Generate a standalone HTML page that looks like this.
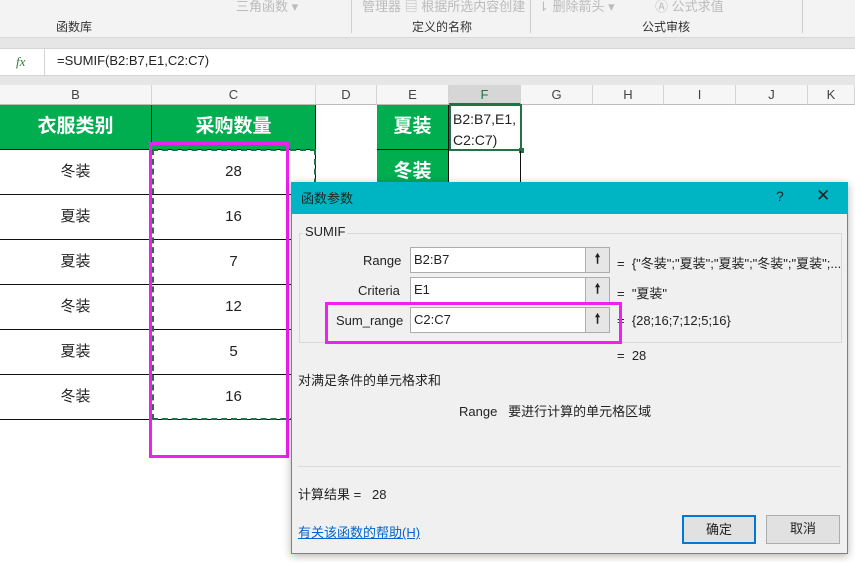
<!DOCTYPE html>
<html><head><meta charset="utf-8"><style>
*{margin:0;padding:0;box-sizing:border-box}
body{width:855px;height:562px;overflow:hidden;background:#fff;position:relative;font-family:"Liberation Sans","Noto Sans CJK SC",sans-serif;font-size:13px;color:#222}
.a{position:absolute}
.t{position:absolute;white-space:nowrap}
.hc{position:absolute;top:85px;height:20px;background:#f6f6f6;border-right:1px solid #d4d4d4;border-bottom:1px solid #bbb;text-align:center;line-height:20px;color:#444;font-size:13px}
.g{position:absolute;background:#00ad4f;color:#fff;font-weight:bold;font-size:19px;text-align:center;border-right:1px solid #111;border-bottom:1px solid #111}
.c{position:absolute;text-align:center;font-size:15px;border-bottom:1px solid #111;border-right:1px solid #111}
.btn{position:absolute;background:#e1e1e1;border:1px solid #adadad;text-align:center;font-size:13px;line-height:26px}
.inp{position:absolute;left:410px;width:200px;height:26px;background:#fff;border:1px solid #adadad;font-size:13px;line-height:24px;padding-left:3px}
.up{position:absolute;right:0;top:0;width:24px;height:24px;background:#e6e6e6;border-left:1px solid #adadad;text-align:center;font-weight:bold;line-height:22px}
</style></head><body>
<div class="a" style="left:0;top:0;width:855px;height:38px;background:#f3f3f3;border-bottom:1px solid #d8d8d8"></div>
<div class="t" style="left:236px;top:-4px;color:#bbb">三角函数 ▾</div>
<div class="t" style="left:362px;top:-4px;color:#bbb">管理器 ▤ 根据所选内容创建</div>
<div class="t" style="left:538px;top:-4px;color:#bbb">⇂ 删除箭头 ▾</div>
<div class="t" style="left:655px;top:-4px;color:#bbb">Ⓐ 公式求值</div>
<div class="t" style="left:56px;top:18px;font-size:12px;color:#333">函数库</div>
<div class="t" style="left:412px;top:18px;font-size:12px;color:#333">定义的名称</div>
<div class="t" style="left:642px;top:18px;font-size:12px;color:#333">公式审核</div>
<div class="a" style="left:351px;top:0;width:1px;height:33px;background:#d0d0d0"></div>
<div class="a" style="left:530px;top:0;width:1px;height:33px;background:#d0d0d0"></div>
<div class="a" style="left:802px;top:0;width:1px;height:33px;background:#d0d0d0"></div>
<div class="a" style="left:0;top:38px;width:855px;height:47px;background:#e6e6e6"></div>
<div class="a" style="left:0;top:48px;width:855px;height:28px;background:#fff;border-top:1px solid #d4d4d4;border-bottom:1px solid #d4d4d4"></div>
<div class="a" style="left:44px;top:48px;width:1px;height:28px;background:#d4d4d4"></div>
<div class="t" style="left:16px;top:54px;font-style:italic;color:#2a7a3a;font-family:'Liberation Serif',serif">fx</div>
<div class="t" style="left:57px;top:53px;font-size:13px">=SUMIF(B2:B7,E1,C2:C7)</div>
<div class="hc" style="left:0;width:152px">B</div>
<div class="hc" style="left:152px;width:164px">C</div>
<div class="hc" style="left:316px;width:61px">D</div>
<div class="hc" style="left:377px;width:72px">E</div>
<div class="hc" style="left:449px;width:72px;background:#d6d6d6;border-bottom:2px solid #217346;color:#217346">F</div>
<div class="hc" style="left:521px;width:72px">G</div>
<div class="hc" style="left:593px;width:71px">H</div>
<div class="hc" style="left:664px;width:72px">I</div>
<div class="hc" style="left:736px;width:72px">J</div>
<div class="hc" style="left:808px;width:47px">K</div>
<div class="g" style="left:0;top:105px;width:152px;height:45px;line-height:44px">衣服类别</div>
<div class="g" style="left:152px;top:105px;width:164px;height:45px;line-height:44px">采购数量</div>
<div class="g" style="left:377px;top:105px;width:72px;height:45px;line-height:44px">夏装</div>
<div class="g" style="left:377px;top:150px;width:72px;height:45px;line-height:44px">冬装</div>
<div class="a" style="left:449px;top:104px;width:73px;height:47px;border:2px solid #217346;background:#fff;font-size:14px;line-height:21px;padding:3px 2px">B2:B7,E1,<br>C2:C7)</div>
<div class="a" style="left:519px;top:148px;width:5px;height:5px;background:#217346"></div>
<div class="a" style="left:449px;top:151px;width:72px;height:44px;border-right:1px solid #111"></div>
<div class="c" style="left:0;top:150px;width:152px;height:45px;line-height:44px">冬装</div><div class="c" style="left:152px;top:150px;width:164px;height:45px;line-height:44px">28</div>
<div class="c" style="left:0;top:195px;width:152px;height:45px;line-height:44px">夏装</div><div class="c" style="left:152px;top:195px;width:164px;height:45px;line-height:44px">16</div>
<div class="c" style="left:0;top:240px;width:152px;height:45px;line-height:44px">夏装</div><div class="c" style="left:152px;top:240px;width:164px;height:45px;line-height:44px">7</div>
<div class="c" style="left:0;top:285px;width:152px;height:45px;line-height:44px">冬装</div><div class="c" style="left:152px;top:285px;width:164px;height:45px;line-height:44px">12</div>
<div class="c" style="left:0;top:330px;width:152px;height:45px;line-height:44px">夏装</div><div class="c" style="left:152px;top:330px;width:164px;height:45px;line-height:44px">5</div>
<div class="c" style="left:0;top:375px;width:152px;height:45px;line-height:44px">冬装</div><div class="c" style="left:152px;top:375px;width:164px;height:45px;line-height:44px">16</div>
<div class="a" style="left:152px;top:149px;width:164px;height:271px;border:2px dashed #217346"></div>
<div class="a" style="left:149px;top:142px;width:140px;height:316px;border:3px solid #f020f0"></div>
<!-- dialog -->
<div class="a" style="left:291px;top:182px;width:557px;height:372px;background:#f0f0f0;border:1px solid #00b4c4;box-shadow:0 2px 8px rgba(0,0,0,.3)"></div>
<div class="a" style="left:291px;top:182px;width:557px;height:32px;background:#00b5c3"></div>
<div class="t" style="left:301px;top:188px;font-size:13px">函数参数</div>
<div class="t" style="left:776px;top:188px;font-size:14px">?</div>
<div class="t" style="left:816px;top:186px;font-size:17px;font-weight:300">✕</div>
<div class="a" style="left:299px;top:233px;width:543px;height:110px;border:1px solid #d8d8d8"></div>
<div class="t" style="left:303px;top:224px;background:#f0f0f0;padding:0 2px;font-size:13px">SUMIF</div>
<div class="t" style="left:363px;top:253px">Range</div>
<div class="t" style="left:358px;top:283px">Criteria</div>
<div class="t" style="left:336px;top:313px">Sum_range</div>
<div class="inp" style="top:247px">B2:B7<div class="up">🠕</div></div>
<div class="inp" style="top:277px">E1<div class="up">🠕</div></div>
<div class="inp" style="top:307px">C2:C7<div class="up">🠕</div></div>
<div class="t" style="left:617px;top:253px">=&nbsp;&nbsp;{"冬装";"夏装";"夏装";"冬装";"夏装";...</div>
<div class="t" style="left:617px;top:283px">=&nbsp;&nbsp;"夏装"</div>
<div class="t" style="left:617px;top:313px">=&nbsp;&nbsp;{28;16;7;12;5;16}</div>
<div class="t" style="left:617px;top:348px">=&nbsp;&nbsp;28</div>
<div class="a" style="left:325px;top:302px;width:297px;height:42px;border:3px solid #f020f0"></div>
<div class="t" style="left:298px;top:370px">对满足条件的单元格求和</div>
<div class="t" style="left:459px;top:401px">Range&nbsp;&nbsp;&nbsp;要进行计算的单元格区域</div>
<div class="a" style="left:298px;top:466px;width:543px;height:1px;background:#dadada"></div>
<div class="t" style="left:298px;top:484px">计算结果 =&nbsp;&nbsp;&nbsp;28</div>
<div class="t" style="left:298px;top:522px;color:#0066cc;text-decoration:underline">有关该函数的帮助(H)</div>
<div class="btn" style="left:682px;top:515px;width:74px;height:29px;border:2px solid #0078d7">确定</div>
<div class="btn" style="left:766px;top:515px;width:74px;height:29px">取消</div>
</body></html>
